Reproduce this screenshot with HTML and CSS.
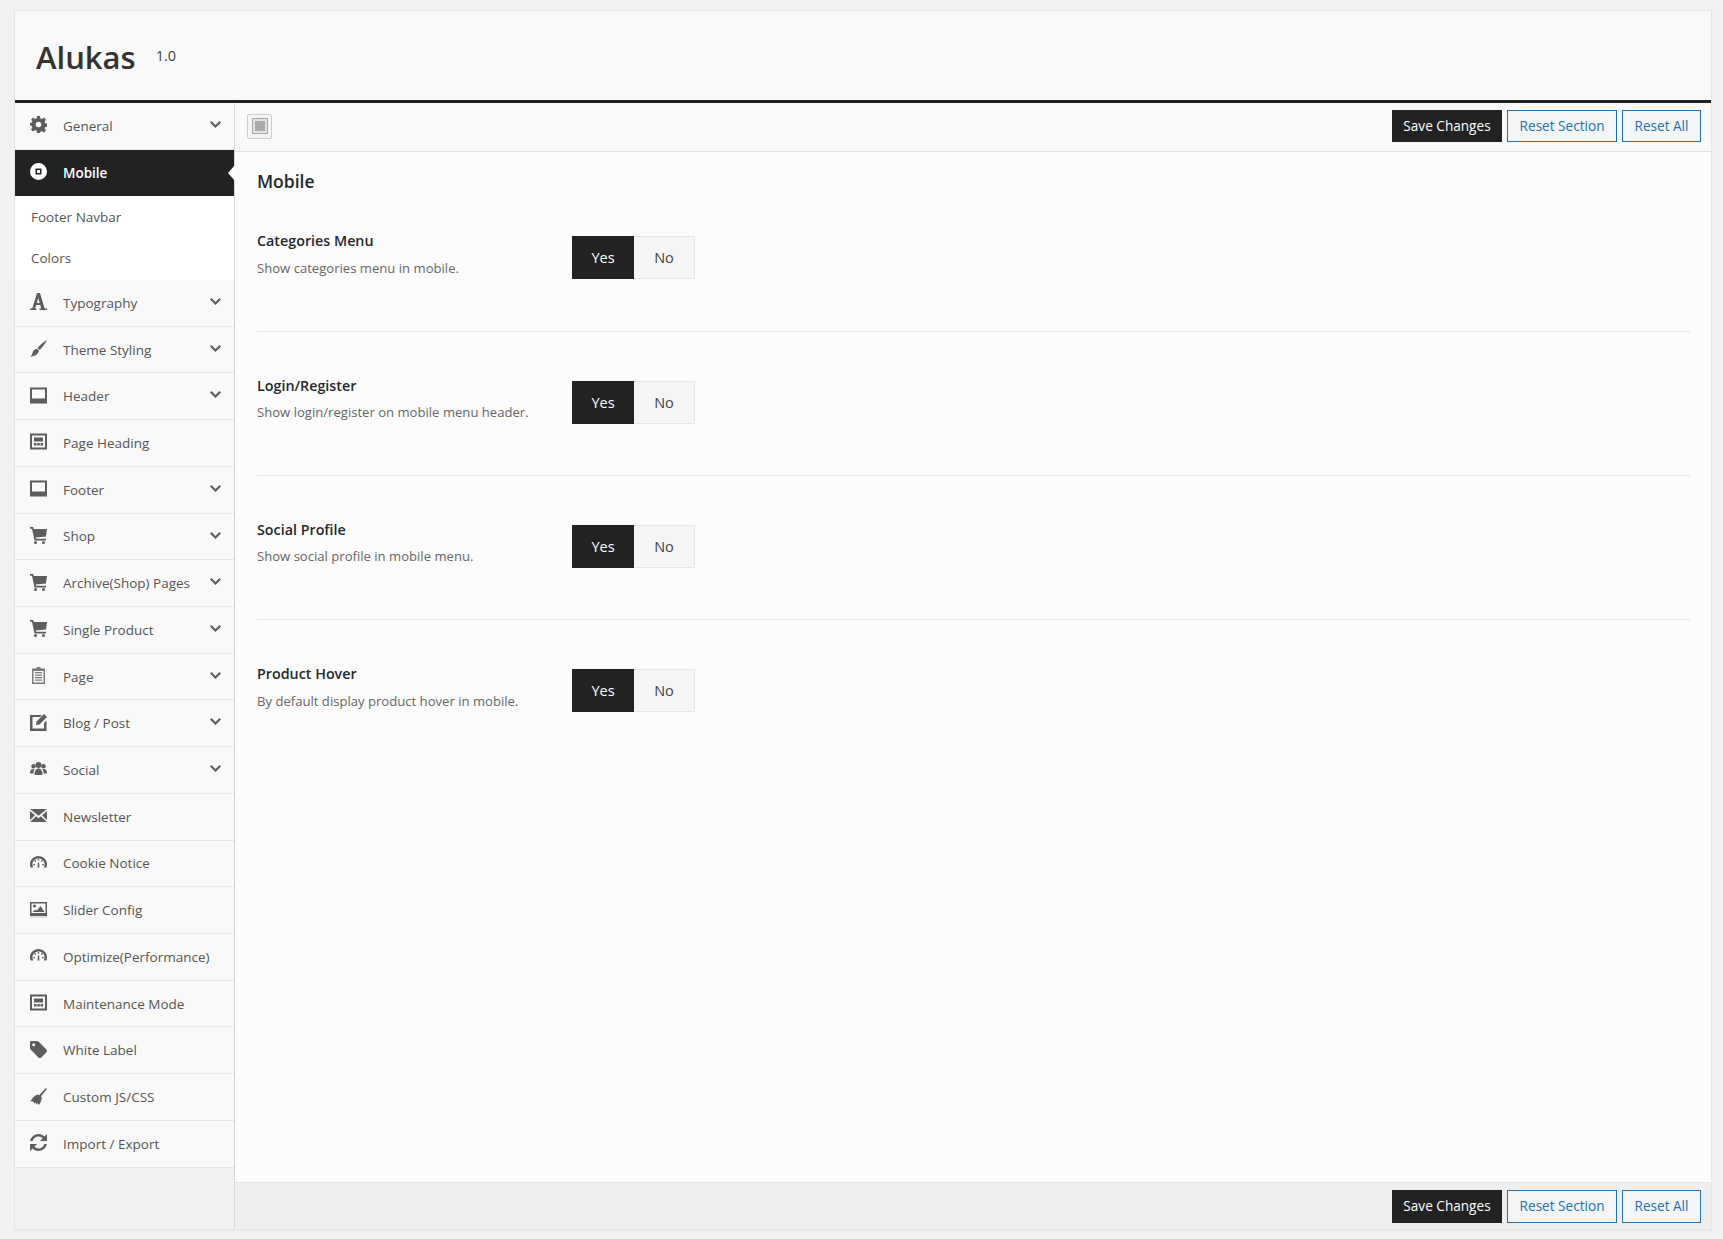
FILE: index.html
```html
<!DOCTYPE html>
<html lang="en">
<head>
  <meta charset="UTF-8" />
  <meta name="viewport" content="width=device-width, initial-scale=1.0"/>
  <title>Alukas Options</title>
  <link rel="stylesheet" href="styles.css">
</head>
<body>

  <svg class="sprite" width="0" height="0">
    <symbol id="i-gear" viewBox="0 0 17 17">
      <path fill-rule="evenodd" d="M7 0h3l.4 2.400 1.500.6 2-1.400 2.100 2.100-1.400 2 .6 1.500 2.300.4v3l-2.300.4-.6 1.500 1.400 2-2.100 2.100-2-1.400-1.500.6L10 17H7l-.4-2.300-1.500-.6-2 1.400L1 13.400l1.400-2-.6-1.500L-.5 9.500V7l2.300-.4.6-1.500L1 3.700 3.100 1.600l2 1.400 1.500-.6zM8.500 5.700a2.800 2.800 0 1 0 0 5.600 2.800 2.800 0 0 0 0-5.600z"/>
    </symbol>
    <symbol id="i-mobile" viewBox="0 0 17 17">
      <path fill-rule="evenodd" d="M8.500 0a8.500 8.500 0 1 1 0 17 8.500 8.500 0 0 1 0-17zM5.500 5.500v6h6v-6zM7 7h3v3H7z"/>
    </symbol>
    <symbol id="i-type" viewBox="0 0 17 17">
      <path fill-rule="evenodd" d="M7 0h3l4.600 15.500H17V17h-7.500v-1.500h1.700L10.300 12H6.200l-1.200 3.500h1.500V17H0v-1.500h2.300zM8.200 5 6.800 10h2.900z"/>
    </symbol>
    <symbol id="i-brush" viewBox="0 0 17 17">
      <path d="M17 0c-1.500 3-4.300 7-7.200 10L7.500 8C10 5 14 1.700 17 0z"/>
      <path d="M7 8.800l2 2c-.6 2.400-2.300 4.200-4.500 5-1.400.5-3 .8-4.500.6 1.300-.7 2-1.700 2.300-3 .5-2.400 2.500-4.100 4.700-4.600z"/>
    </symbol>
    <symbol id="i-layout" viewBox="0 0 17 17">
      <path fill-rule="evenodd" d="M0 .500h17v16H0zM2 2.500v9h13v-9z"/>
    </symbol>
    <symbol id="i-page" viewBox="0 0 17 17">
      <path fill-rule="evenodd" d="M0 .500h17v16H0zM2 2.500v12h13v-12zM4 4.500h9v4H4zM4 10h2.500v2.500H4zM7.300 10h2.500v2.500H7.300zM10.500 10H13v2.500h-2.500z"/>
    </symbol>
    <symbol id="i-cart" viewBox="0 0 17 17">
      <path d="M0 0h3.200l.6 2H17l-1 7.500-10.300 1 .3 1.300h10v1.700H4.500L2 1.700H0z"/>
      <circle cx="5.500" cy="15.500" r="1.500"/>
      <circle cx="13.500" cy="15.500" r="1.500"/>
    </symbol>
    <symbol id="i-clip" viewBox="0 0 17 17">
      <path fill-rule="evenodd" opacity=".8" d="M2 1.500h4L7 0h3l1 1.500h4V17H2zM3.500 4v11.500h10V4zM5 5h7v1.200H5zM5 7.500h7v1.200H5zM5 10h7v1.200H5zM5 12.500h7v1.200H5z"/>
    </symbol>
    <symbol id="i-edit" viewBox="0 0 17 17">
      <path d="M0 1h12l-2 2H2.500v11.500H14V9l2.500-2.500V17H0z"/>
      <path d="M14 0l3 3-7.500 7.500-3.500.5.500-3.500z"/>
    </symbol>
    <symbol id="i-group" viewBox="0 0 17 17">
      <circle cx="8.500" cy="5" r="3"/>
      <circle cx="3.500" cy="6.200" r="2.200"/>
      <circle cx="13.500" cy="6.200" r="2.200"/>
      <path d="M4.500 15c0-4 1.500-6.500 4-6.500s4 2.500 4 6.500z"/>
      <path d="M0 13.500C0 10.500 1 9 3.200 9c.6 0 1 .1 1.400.3-.8 1.200-1.200 2.700-1.200 4.200zM17 13.500c0-3-1-4.500-3.200-4.500-.6 0-1 .1-1.400.3.800 1.200 1.200 2.700 1.200 4.200z"/>
    </symbol>
    <symbol id="i-mail" viewBox="0 0 17 17">
      <path d="M0 2h17L8.500 8.800zM0 4l5 4.300L0 13zM17 4l-5 4.300 5 4.700zM6.200 9.300l2.300 1.900 2.300-1.900 6.200 5.700H0z"/>
    </symbol>
    <symbol id="i-gauge" viewBox="0 0 17 17">
      <path d="M8.500 2C3.800 2 0 5.700 0 10.300c0 1.200.2 2.100.6 3.200h2.600C2.700 12.300 2.400 11.400 2.400 10.300c0-3.300 2.700-5.900 6.100-5.900s6.100 2.600 6.100 5.900c0 1.100-.3 2-.8 3.200h2.600c.4-1.100.6-2 .6-3.200C17 5.700 13.200 2 8.500 2z"/>
      <path d="M7.800 5h1.400v1.600H7.800zM4.200 6.700l1-.9 1 1.200-1 .9zM11.800 5.800l1 .9-1 1.200-1-.9zM3.300 10h1.600v1.300H3.300zM12.100 10h1.600v1.300h-1.600zM7.900 8.500h1.200l.3 5H7.600z"/>
    </symbol>
    <symbol id="i-pic" viewBox="0 0 17 17">
      <path fill-rule="evenodd" d="M0 1h17v14H0zM1.500 2.500v9.500h14V2.500z"/>
      <circle cx="4.500" cy="5" r="1.500"/>
      <path d="M2.500 11l3-2.500 1.500 1 3.500-4.500 4 6z"/>
      <path d="M0 15.500h17V16.500H0z" opacity=".35"/>
    </symbol>
    <symbol id="i-tag" viewBox="0 0 17 17">
      <path fill-rule="evenodd" d="M1.500 0h5.500c.6 0 1.100.2 1.500.6l7.900 7.900c.8.800.8 2 0 2.800l-5.200 5.100c-.8.8-2 .8-2.800 0L.6 8.500C.2 8.100 0 7.600 0 7V1.500C0 .7.700 0 1.500 0zM3.700 2.200a1.500 1.500 0 1 0 0 3 1.500 1.500 0 0 0 0-3z"/>
    </symbol>
    <symbol id="i-broom" viewBox="0 0 17 17">
      <path d="M16 0l1 1-6 7.300.8 1.200c-.3 2.700-1.200 5.300-2.600 7.500L7.700 15l-.9 1.700-1.200-2.200-1.200 1-.9-1.800L0 13c1.500-.5 2-2 2.800-3.200C4 8.500 6 7 8 6.500l1.200.8z"/>
    </symbol>
    <symbol id="i-sync" viewBox="0 0 17 17">
      <path d="M8.700 0c2.300 0 4.300 1 5.700 2.500L17 0v7h-7l2.600-2.600C11.600 3.200 10.200 2.500 8.700 2.500 5.800 2.500 3.300 4.400 2.600 7H.1C.9 3 4.400 0 8.700 0z"/>
      <path d="M8.300 17c-2.300 0-4.300-1-5.700-2.500L0 17v-7h7l-2.600 2.600c1 1.200 2.400 1.900 3.900 1.900 2.900 0 5.400-1.900 6.100-4.500h2.500c-.8 4-4.300 7-8.600 7z"/>
    </symbol>
    <symbol id="i-down" viewBox="0 0 11 7">
      <path d="M1.500 0 5.500 4l4-4L11 1.500 5.500 7 0 1.500z"/>
    </symbol>
  </svg>

  <div class="panel">
    <header class="panel-head">
      <h1>Alukas</h1>
      <span class="version">1.0</span>
    </header>

    <div class="panel-body">
      <nav class="side">
        <a class="item"><svg class="ico"><use href="#i-gear"/></svg>General<svg class="arrow"><use href="#i-down"/></svg></a>
        <a class="item active"><svg class="ico"><use href="#i-mobile"/></svg>Mobile</a>
        <div class="submenu">
          <a>Footer Navbar</a>
          <a>Colors</a>
        </div>
        <a class="item"><svg class="ico"><use href="#i-type"/></svg>Typography<svg class="arrow"><use href="#i-down"/></svg></a>
        <a class="item"><svg class="ico"><use href="#i-brush"/></svg>Theme Styling<svg class="arrow"><use href="#i-down"/></svg></a>
        <a class="item"><svg class="ico"><use href="#i-layout"/></svg>Header<svg class="arrow"><use href="#i-down"/></svg></a>
        <a class="item"><svg class="ico"><use href="#i-page"/></svg>Page Heading</a>
        <a class="item"><svg class="ico"><use href="#i-layout"/></svg>Footer<svg class="arrow"><use href="#i-down"/></svg></a>
        <a class="item"><svg class="ico"><use href="#i-cart"/></svg>Shop<svg class="arrow"><use href="#i-down"/></svg></a>
        <a class="item"><svg class="ico"><use href="#i-cart"/></svg>Archive(Shop) Pages<svg class="arrow"><use href="#i-down"/></svg></a>
        <a class="item"><svg class="ico"><use href="#i-cart"/></svg>Single Product<svg class="arrow"><use href="#i-down"/></svg></a>
        <a class="item"><svg class="ico"><use href="#i-clip"/></svg>Page<svg class="arrow"><use href="#i-down"/></svg></a>
        <a class="item"><svg class="ico"><use href="#i-edit"/></svg>Blog / Post<svg class="arrow"><use href="#i-down"/></svg></a>
        <a class="item"><svg class="ico"><use href="#i-group"/></svg>Social<svg class="arrow"><use href="#i-down"/></svg></a>
        <a class="item"><svg class="ico"><use href="#i-mail"/></svg>Newsletter</a>
        <a class="item"><svg class="ico"><use href="#i-gauge"/></svg>Cookie Notice</a>
        <a class="item"><svg class="ico"><use href="#i-pic"/></svg>Slider Config</a>
        <a class="item"><svg class="ico"><use href="#i-gauge"/></svg>Optimize(Performance)</a>
        <a class="item"><svg class="ico"><use href="#i-page"/></svg>Maintenance Mode</a>
        <a class="item"><svg class="ico"><use href="#i-tag"/></svg>White Label</a>
        <a class="item"><svg class="ico"><use href="#i-broom"/></svg>Custom JS/CSS</a>
        <a class="item"><svg class="ico"><use href="#i-sync"/></svg>Import / Export</a>
      </nav>

      <main class="main">
        <div class="bar top-bar">
          <span class="expand"><svg viewBox="0 0 16 16"><rect x=".5" y=".5" width="15" height="15" fill="#e2e2e2" stroke="#a8a8a8"/><rect x="3" y="3" width="10" height="10" fill="#a8a8a8"/></svg></span>
          <div class="actions">
            <button class="btn btn-save">Save Changes</button>
            <button class="btn btn-reset">Reset Section</button>
            <button class="btn btn-reset">Reset All</button>
          </div>
        </div>

        <section class="content">
          <h2>Mobile</h2>

          <div class="field">
            <div class="field-text">
              <h3>Categories Menu</h3>
              <p>Show categories menu in mobile.</p>
            </div>
            <div class="switch"><span class="on">Yes</span><span class="off">No</span></div>
          </div>

          <div class="field">
            <div class="field-text">
              <h3>Login/Register</h3>
              <p>Show login/register on mobile menu header.</p>
            </div>
            <div class="switch"><span class="on">Yes</span><span class="off">No</span></div>
          </div>

          <div class="field">
            <div class="field-text">
              <h3>Social Profile</h3>
              <p>Show social profile in mobile menu.</p>
            </div>
            <div class="switch"><span class="on">Yes</span><span class="off">No</span></div>
          </div>

          <div class="field last">
            <div class="field-text">
              <h3>Product Hover</h3>
              <p>By default display product hover in mobile.</p>
            </div>
            <div class="switch"><span class="on">Yes</span><span class="off">No</span></div>
          </div>
        </section>

        <div class="bar bottom-bar">
          <div class="actions">
            <button class="btn btn-save">Save Changes</button>
            <button class="btn btn-reset">Reset Section</button>
            <button class="btn btn-reset">Reset All</button>
          </div>
        </div>
      </main>
    </div>
  </div>

</body>
</html>
```

FILE: styles.css
```css
* {
  box-sizing: border-box;
}

body {
  margin: 0;
  padding: 10px 11px 9px 14px;
  background: #f1f1f1;
  color: #555;
  font-family: "Open Sans", "Noto Sans", sans-serif;
  font-size: 13.5px;
}

.sprite {
  position: absolute;
}

.panel {
  height: 1220px;
  display: flex;
  flex-direction: column;
  border: 1px solid #e5e5e5;
  box-shadow: 0 1px 1px rgba(0,0,0,0.04);
}

.panel-head {
  height: 92px;
  flex: none;
  padding-left: 21px;
  display: flex;
  align-items: flex-start;
  background: #f9f9f9;
  border-bottom: 3px solid #222;
}

.panel-head h1 {
  margin: 25px 0 0;
  font-size: 31px;
  line-height: 42px;
  font-weight: 600;
  color: #333;
}

.version {
  margin: 36px 0 0 20px;
  font-size: 14.5px;
  line-height: 18px;
  color: #444;
}

.panel-body {
  flex: 1;
  display: flex;
  min-height: 0;
}

.side {
  width: 220px;
  flex: none;
  background: #f1f1f1;
  border-right: 1px solid #d8d8d8;
}

.item {
  position: relative;
  height: 46.72px;
  display: flex;
  align-items: center;
  padding-left: 15px;
  background: #f9f9f9;
  border-bottom: 1px solid #e7e7e7;
}

.ico {
  width: 17px;
  height: 17px;
  flex: none;
  margin: -2px 16px 0 0;
  fill: #5d5d5d;
}

.arrow {
  position: absolute;
  right: 13px;
  top: 18px;
  width: 11px;
  height: 7px;
  fill: #5d5d5d;
}

.item.active {
  background: #222;
  color: #fff;
  font-weight: 600;
  border-bottom: 0;
  padding-bottom: 1px;
}

.item.active .ico {
  fill: #fff;
}

.item.active::after {
  content: '';
  position: absolute;
  right: -1px;
  top: 15px;
  border-style: solid;
  border-width: 8px 7px 8px 0;
  border-color: transparent #fff transparent transparent;
}

.submenu {
  height: 83.5px;
  padding-top: 1px;
  background: #fff;
}

.submenu a {
  display: block;
  height: 41px;
  line-height: 41px;
  padding-left: 16px;
}

.main {
  flex: 1;
  display: flex;
  flex-direction: column;
  min-width: 0;
}

.bar {
  flex: none;
  display: flex;
  align-items: center;
  padding-right: 10px;
}

.top-bar {
  height: 49px;
  background: #f9f9f9;
  border-bottom: 1px solid #e0e0e0;
  padding-left: 12px;
}

.bottom-bar {
  height: 47px;
  background: #eee;
  border-top: 1px solid #e5e5e5;
}

.expand {
  width: 25px;
  height: 25px;
  margin-top: -2px;
  padding: 3.5px;
  background: #f5f5f5;
  border: 1px solid #ccc;
  border-radius: 2px;
}

.expand svg {
  display: block;
}

.actions {
  margin-left: auto;
  display: flex;
  gap: 5px;
}

.top-bar .actions {
  margin-top: -3px;
}

.btn {
  height: 32px;
  padding: 0 10.5px;
  font: 13.6px/30px "Open Sans", "Noto Sans", sans-serif;
  cursor: pointer;
}

.bottom-bar .btn {
  height: 33px;
}

.btn-save {
  background: #222;
  border: 1px solid #222;
  color: #fff;
}

.btn-reset {
  padding: 0 11.5px;
  background: #f3f5f6;
  border: 1px solid #2271b1;
  color: #2271b1;
}

.content {
  flex: 1;
  padding: 17px 21px 0 22px;
  background: #fcfcfc;
}

.content h2 {
  margin: 0 0 43.3px;
  height: 24px;
  font-size: 17.5px;
  line-height: 24px;
  font-weight: 600;
  color: #23282d;
}

.field {
  display: flex;
  align-items: flex-start;
  padding-bottom: 51.5px;
  margin-bottom: 48.83px;
  border-bottom: 1px solid #e5e5e5;
}

.field.last {
  border-bottom: 0;
}

.field-text {
  width: 315px;
  flex: none;
  margin-top: -5px;
}

.field-text h3 {
  margin: 0 0 7.5px;
  font-size: 14.3px;
  line-height: 20px;
  font-weight: 600;
  color: #23282d;
}

.field-text p {
  margin: 0;
  font-size: 13.1px;
  line-height: 18px;
  color: #666;
}

.switch {
  display: flex;
  height: 43px;
  font-size: 14.5px;
}

.switch span {
  display: flex;
  align-items: center;
  justify-content: center;
}

.switch .on {
  width: 62px;
  background: #222;
  color: #fff;
}

.switch .off {
  width: 61px;
  background: #f5f5f5;
  border: 1px solid #e5e5e5;
  border-left: 0;
  color: #444;
}
```
